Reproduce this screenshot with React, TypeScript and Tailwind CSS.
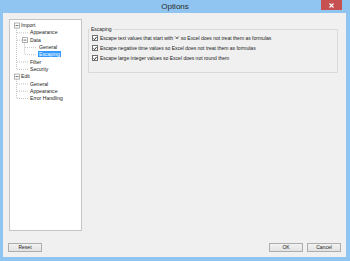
import React from 'react';

const font = { fontFamily: '"Liberation Sans", Arial, sans-serif' };

type Row = { label: string; indent: number; selected?: boolean };

const rows: Row[] = [
  { label: 'Import', indent: 11 },
  { label: 'Appearance', indent: 20 },
  { label: 'Data', indent: 20 },
  { label: 'General', indent: 29 },
  { label: 'Escaping', indent: 29, selected: true },
  { label: 'Filter', indent: 20 },
  { label: 'Security', indent: 20 },
  { label: 'Edit', indent: 11 },
  { label: 'General', indent: 20 },
  { label: 'Appearance', indent: 20 },
  { label: 'Error Handling', indent: 20 },
];

const ROW_H = 7.3;
const cy = (i: number) => 5 + ROW_H * i;

function TreeLines() {
  const dot = { stroke: '#b4b4b4', strokeWidth: 0.8, strokeDasharray: '1 1' };
  const box = (x: number, y: number) => (
    <g key={`b${x}-${y}`}>
      <rect x={x - 2} y={y - 2} width={5} height={5} fill="#fff" stroke="#a0a0a0" strokeWidth={0.8} />
      <line x1={x - 1} y1={y + 0.5} x2={x + 2} y2={y + 0.5} stroke="#555" strokeWidth={0.8} />
    </g>
  );
  return (
    <svg className="absolute left-0 top-0" width={73} height={110}>
      {/* Import branch */}
      <line x1={6.5} y1={cy(0) + 3} x2={6.5} y2={cy(6)} {...dot} />
      {[1, 5, 6].map((i) => (
        <line key={i} x1={7} y1={cy(i) + 0.5} x2={18} y2={cy(i) + 0.5} {...dot} />
      ))}
      <line x1={7} y1={cy(2) + 0.5} x2={12} y2={cy(2) + 0.5} {...dot} />
      {/* Data branch */}
      <line x1={14.5} y1={cy(2) + 3} x2={14.5} y2={cy(4)} {...dot} />
      {[3, 4].map((i) => (
        <line key={i} x1={15} y1={cy(i) + 0.5} x2={27} y2={cy(i) + 0.5} {...dot} />
      ))}
      {/* Edit branch */}
      <line x1={6.5} y1={cy(7) + 3} x2={6.5} y2={cy(10)} {...dot} />
      {[8, 9, 10].map((i) => (
        <line key={i} x1={7} y1={cy(i) + 0.5} x2={18} y2={cy(i) + 0.5} {...dot} />
      ))}
      {box(6.5, cy(0))}
      {box(14.5, cy(2))}
      {box(6.5, cy(7))}
    </svg>
  );
}

function Check({ label }: { label: string }) {
  return (
    <div className="flex items-center h-[10px] pl-[3px] gap-[1px]">
      <span className="w-[6px] h-[6px] border border-[#707070] bg-white flex items-center justify-center">
        <svg width="5" height="5" viewBox="0 0 5 5">
          <path d="M0.5 2.4 L1.9 3.9 L4.5 0.6" fill="none" stroke="#111" strokeWidth="1.1" />
        </svg>
      </span>
      <span className="text-[5px] leading-[6px] text-[#1a1a1a] whitespace-nowrap ml-[1px]">{label}</span>
    </div>
  );
}

function Btn({ label }: { label: string }) {
  return (
    <button className="w-[34px] h-[9px] border border-[#adadad] bg-gradient-to-b from-[#f2f2f2] to-[#e3e3e3] text-[5px] leading-[7px] text-[#1a1a1a] flex items-center justify-center">
      {label}
    </button>
  );
}

export default function App() {
  return (
    <div className="w-[350px] h-[261px] bg-[#90c5f2] flex flex-col" style={font}>
      {/* Title bar */}
      <div className="relative h-[13px] flex items-center justify-center">
        <span className="text-[8px] leading-[10px] text-[#2a2a2a] pt-[1px]">Options</span>
        <div className="absolute right-[8px] top-0 w-[21px] h-[10px] bg-[#c75050] flex items-center justify-center">
          <svg width="5" height="5" viewBox="0 0 5 5">
            <path d="M0.5 0.5 L4.5 4.5 M4.5 0.5 L0.5 4.5" stroke="#fff" strokeWidth="1.1" />
          </svg>
        </div>
      </div>

      {/* Client area */}
      <div className="ml-[3px] mr-[4px] mb-[4px] flex-1 bg-[#f0f0f0] flex flex-col">
        <div className="flex pt-[6px] pl-[6px]">
          {/* Tree */}
          <div className="relative w-[73px] h-[212px] bg-white border border-[#c4c4c4] shrink-0">
            <TreeLines />
            <div className="relative flex flex-col">
              {rows.map((r, i) => (
                <div
                  key={i}
                  className="h-[7.3px] flex items-center text-[5.1px] leading-[6px] text-[#1a1a1a] whitespace-nowrap"
                  style={{ paddingLeft: r.indent, marginTop: i === 0 ? 1.5 : 0 }}
                >
                  {r.selected ? (
                    <span className="bg-[#3399ff] text-white px-[1px] -ml-[1px]">{r.label}</span>
                  ) : (
                    <span className="bg-white">{r.label}</span>
                  )}
                </div>
              ))}
            </div>
          </div>

          {/* Right panel */}
          <div className="flex-1 pl-[6px] pr-[8px] pt-[10px]">
            <div className="border border-[#d9d9d9] rounded-[1px] h-[44px] flex flex-col">
              <span className="-mt-[4px] ml-[1px] px-[1px] w-fit bg-[#f0f0f0] text-[5px] leading-[6px] text-[#1a1a1a]">
                Escaping
              </span>
              <div className="pt-[1px]">
                <Check label="Escape text values that start with '=' so Excel does not treat them as formulas" />
                <Check label="Escape negative time values so Excel does not treat them as formulas" />
                <Check label="Escape large integer values so Excel does not round them" />
              </div>
            </div>
          </div>
        </div>

        {/* Buttons */}
        <div className="mt-auto flex items-center px-[5px] pb-[5px]">
          <Btn label="Reset" />
          <div className="flex-1" />
          <div className="flex gap-[4px]">
            <Btn label="OK" />
            <Btn label="Cancel" />
          </div>
        </div>
      </div>
    </div>
  );
}
